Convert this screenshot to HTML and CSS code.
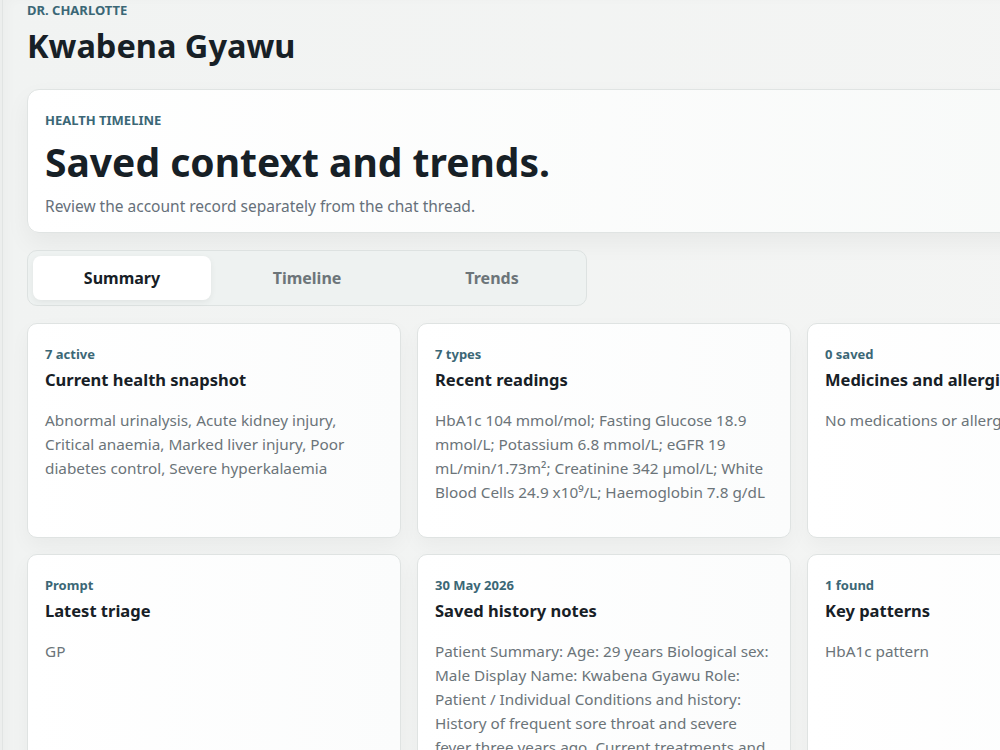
FILE: index.html
```html
<!DOCTYPE html>
<html lang="en">

<head>
    <meta charset="UTF-8">
    <meta name="viewport" content="width=device-width, initial-scale=1.0">
    <title>Health Timeline</title>
    <link rel="stylesheet" href="styles.css">
</head>

<body>
    <div id="shell">
        <header class="pageHead">
            <div class="eyebrow">Dr. Charlotte</div>
            <h1>Kwabena Gyawu</h1>
        </header>

        <section class="hero">
            <div class="eyebrow">Health timeline</div>
            <h2>Saved context and trends.</h2>
            <p>Review the account record separately from the chat thread.</p>
        </section>

        <nav class="tabs">
            <button class="tab active">Summary</button>
            <button class="tab">Timeline</button>
            <button class="tab">Trends</button>
        </nav>

        <div class="cards">
            <div class="card">
                <div class="cardLabel">7 active</div>
                <h3>Current health snapshot</h3>
                <p>Abnormal urinalysis, Acute kidney injury, Critical anaemia, Marked liver injury, Poor diabetes control, Severe hyperkalaemia</p>
            </div>
            <div class="card">
                <div class="cardLabel">7 types</div>
                <h3>Recent readings</h3>
                <p>HbA1c 104 mmol/mol; Fasting Glucose 18.9 mmol/L; Potassium 6.8 mmol/L; eGFR 19 mL/min/1.73m²; Creatinine 342 µmol/L; White Blood Cells 24.9 x10⁹/L; Haemoglobin 7.8 g/dL</p>
            </div>
            <div class="card">
                <div class="cardLabel">0 saved</div>
                <h3>Medicines and allergies</h3>
                <p>No medications or allergies saved yet.</p>
            </div>
            <div class="card">
                <div class="cardLabel">Prompt</div>
                <h3>Latest triage</h3>
                <p>GP</p>
            </div>
            <div class="card">
                <div class="cardLabel">30 May 2026</div>
                <h3>Saved history notes</h3>
                <p>Patient Summary: Age: 29 years Biological sex: Male Display Name: Kwabena Gyawu Role: Patient / Individual Conditions and history: History of frequent sore throat and severe fever three years ago. Current treatments and medications: none recorded.</p>
            </div>
            <div class="card">
                <div class="cardLabel">1 found</div>
                <h3>Key patterns</h3>
                <p>HbA1c pattern</p>
            </div>
        </div>
    </div>
</body>

</html>
```

FILE: styles.css
```css
body {
    font-family: 'Noto Sans', 'Open Sans', sans-serif;
    background: #eceeed;
    margin: 0;
    padding: 0;
    overflow: hidden;
    color: #172026;
}

#shell {
    margin-left: 2px;
    border-left: 1px solid #e1e4e3;
    background: linear-gradient(to right, #f1f3f2, #f4f5f4);
    box-shadow: inset 6px 0 10px rgba(0, 0, 0, 0.02);
    padding: 0 0 40px 24px;
    width: 1160px;
    min-height: 750px;
}

.eyebrow {
    font-size: 13px;
    font-weight: bold;
    text-transform: uppercase;
    color: #3b6776;
    line-height: 16px;
}

.pageHead {
    padding-top: 2px;
}

h1 {
    margin: 8px 0 0;
    font-size: 32.5px;
    line-height: 40px;
    color: #172026;
}

.hero {
    margin-top: 23px;
    background: linear-gradient(to right, #ffffff, #f7f9f8);
    border: 1px solid #e0e4e3;
    border-radius: 12px;
    box-shadow: 0 10px 24px rgba(0, 0, 0, 0.05);
    padding: 22px 17px 15px;
}

.hero h2 {
    margin: 9px 0 0;
    font-size: 39px;
    line-height: 50px;
    color: #172026;
}

.hero p {
    margin: 8px 0 0;
    font-size: 15.5px;
    color: #66707a;
}

.tabs {
    margin-top: 17px;
    width: 548px;
    display: grid;
    grid-template-columns: repeat(3, 1fr);
    gap: 7px;
    padding: 5px;
    background: #eef2f1;
    border: 1px solid #dde2e1;
    border-radius: 10px;
}

.tab {
    font-family: inherit;
    font-size: 16px;
    font-weight: bold;
    color: #6c7579;
    background: transparent;
    border: none;
    border-radius: 8px;
    height: 44px;
}

.tab.active {
    background: white;
    color: #172026;
    box-shadow: 0 2px 6px rgba(0, 0, 0, 0.06);
}

.cards {
    margin-top: 17px;
    display: grid;
    grid-template-columns: repeat(3, 374px);
    gap: 16px;
}

.card {
    background: linear-gradient(to right, #ffffff, #fbfcfc);
    border: 1px solid #dfe3e2;
    border-radius: 10px;
    box-shadow: 0 8px 20px rgba(0, 0, 0, 0.04);
    padding: 21px 17px 17px;
    height: 175px;
}

.cardLabel {
    font-size: 13px;
    font-weight: bold;
    color: #3b6776;
    line-height: 18px;
}

.card h3 {
    margin: 5px 0 0;
    font-size: 16.5px;
    line-height: 24px;
    color: #172026;
}

.card p {
    margin: 16px 0 0;
    font-size: 15.3px;
    line-height: 24px;
    color: #6b7479;
}
```
